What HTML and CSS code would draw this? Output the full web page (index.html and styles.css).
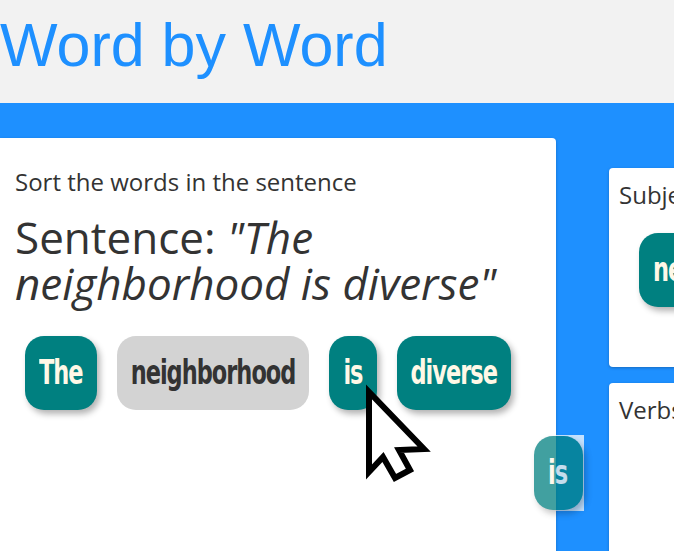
FILE: index.html
```html
<!DOCTYPE html>
<html lang="en">
<head>
<meta charset="utf-8">
<title>Word by Word</title>
<link rel="stylesheet" href="styles.css">
</head>
<body>
<header class="header">
  <h1 class="title">Word by Word</h1>
</header>
<main class="board">
  <section class="card sentence-card">
    <p class="instructions">Sort the words in the sentence</p>
    <h2 class="sentence">Sentence: <em>"The neighborhood is diverse"</em></h2>
    <div class="words">
      <span class="word"><span class="word-text">The</span></span>
      <span class="word used"><span class="word-text">neighborhood</span></span>
      <span class="word"><span class="word-text">is</span></span>
      <span class="word"><span class="word-text">diverse</span></span>
    </div>
  </section>
  <div class="categories">
    <section class="card category">
      <h3 class="category-title">Subject</h3>
      <div class="words category-words">
        <span class="word"><span class="word-text">neighborhood</span></span>
      </div>
    </section>
    <section class="card category verbs">
      <h3 class="category-title">Verbs</h3>
    </section>
  </div>
  <div class="drag-ghost"><span class="word"><span class="word-text">is</span></span></div>
  <svg class="cursor" width="90" height="110" viewBox="0 0 90 110" aria-hidden="true">
    <polygon points="14,12 14,92 28,77 40,98 55,90 44,70 69,69" fill="#fff" stroke="#000" stroke-width="6" stroke-linejoin="miter"/>
  </svg>
</main>
</body>
</html>
```
FILE: styles.css
```css
html, body {
  margin: 0;
  padding: 0;
  height: 100%;
  overflow: hidden;
}
body {
  font-family: "Open Sans", "Noto Sans", sans-serif;
  color: #333;
  background: #1e90ff;
}
.header {
  background: #f2f2f2;
  height: 103px;
  overflow: hidden;
}
.title {
  margin: 11px 0 0 0;
  font-family: "Liberation Sans", Arial, sans-serif;
  font-weight: 400;
  font-size: 61px;
  line-height: 69px;
  color: #1e90ff;
}
.board {
  position: relative;
  display: flex;
  align-items: flex-start;
  padding-top: 35px;
  height: 600px;
}
.card {
  background: #fff;
  border-radius: 4px;
  box-shadow: 0 1px 3px rgba(0, 0, 0, 0.25);
}
.sentence-card {
  width: 526px;
  flex: none;
  min-height: 560px;
  padding: 0 15px;
  border-radius: 0 4px 0 0;
}
.instructions {
  margin: 0;
  padding-top: 26px;
  font-size: 24px;
  line-height: 36px;
}
.sentence {
  margin: 14px 0 0 0;
  font-weight: 400;
  font-size: 44px;
  line-height: 46px;
}
.sentence em {
  font-style: italic;
}
.words {
  display: flex;
  flex-wrap: wrap;
  align-items: flex-start;
  margin-top: 30px;
}
.word {
  flex: none;
  margin: 0 10px;
  padding: 18px 14px;
  border-radius: 19px;
  background: #008080;
  color: #fff8e7;
  font-family: "DejaVu Sans Condensed", "DejaVu Sans", sans-serif;
  font-weight: 700;
  font-size: 25px;
  letter-spacing: -1px;
  line-height: 38px;
  box-shadow: 3px 4px 6px rgba(0, 0, 0, 0.3);
}
.word-text {
  display: inline-block;
  transform: scaleY(1.32);
}
.word.used {
  background: #d3d3d3;
  color: #333;
  box-shadow: none;
}
.categories {
  flex: none;
  display: flex;
  flex-direction: column;
  gap: 16px;
  margin-left: 53px;
  padding-top: 30px;
  width: 220px;
}
.category {
  height: 199px;
  padding: 0 10px;
}
.category.verbs {
  height: 400px;
}
.category-title {
  margin: 0;
  padding-top: 9px;
  font-weight: 400;
  font-size: 24px;
  line-height: 36px;
}
.category-words {
  margin-top: 20px;
  flex-wrap: nowrap;
}
.category-words .word {
  margin-left: 20px;
}
.drag-ghost {
  position: absolute;
  left: 533px;
  top: 332px;
  width: 51px;
  height: 76px;
  background: #fff;
  opacity: 0.74;
}
.drag-ghost .word {
  display: block;
  margin: 1px 0 0 1px;
  width: 21px;
  padding: 18px 14px;
}
.cursor {
  position: absolute;
  left: 355px;
  top: 277px;
}
```
